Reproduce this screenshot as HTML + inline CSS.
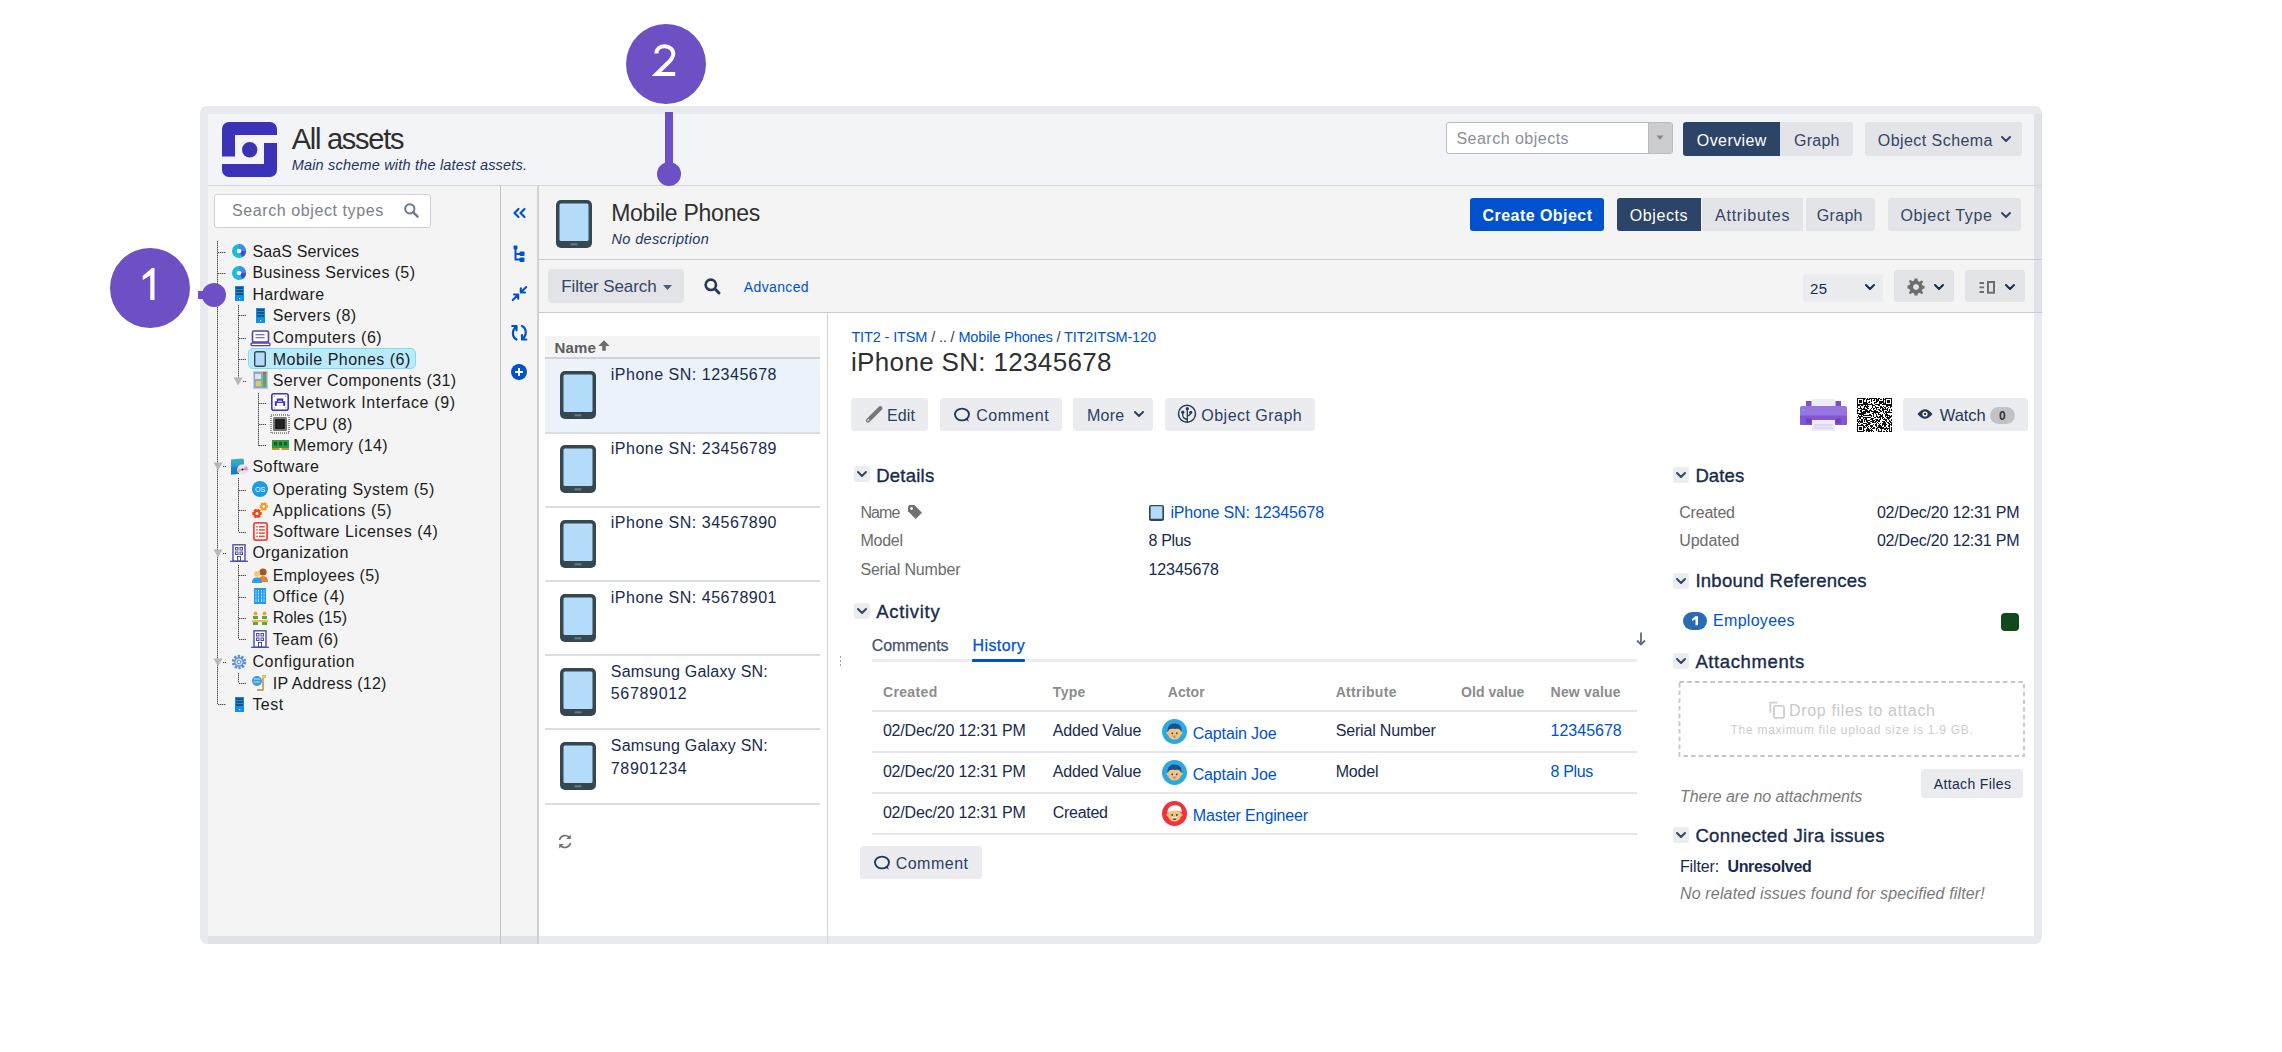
<!DOCTYPE html>
<html><head><meta charset="utf-8">
<style>
*{margin:0;padding:0;box-sizing:border-box}
html,body{width:2282px;height:1052px;overflow:hidden;background:#fff;font-family:"Liberation Sans",sans-serif;color:#172b4d}
.a{position:absolute}
.t{position:absolute;white-space:nowrap;line-height:1}
svg{position:absolute;overflow:visible}
</style></head><body>
<div class="a" style="left:110px;top:248px;width:80px;height:80px;background:#6c50c4;border-radius:50%"></div>
<svg style="left:0;top:0" width="1" height="1"><path fill="#fff" d="M152,268.1 L154.5,268.1 L154.5,299.9 L150.3,299.9 L150.3,275.6 L142.7,279.9 L142.7,276 Z"/></svg>
<div class="a" style="left:626px;top:24px;width:80px;height:80px;background:#6c50c4;border-radius:50%"></div>
<svg style="left:0;top:0" width="1" height="1"><path fill="none" stroke="#fff" stroke-width="4" d="M656.4,53.5 C656.4,48.8 660.2,46.3 664.9,46.3 C669.6,46.3 673.3,49.4 673.3,53.8 C673.3,57.5 671.3,60 667.5,63.3 L656.6,73.9 L675.2,73.9"/></svg>
<div class="a" style="left:200px;top:106px;width:1842px;height:838px;background:#e9eaee;border-radius:7px"></div>
<div class="a" style="left:2034px;top:114px;width:8px;height:199px;background:#e1e2e6;"></div>
<div class="a" style="left:208px;top:114px;width:1826px;height:822px;background:#f4f4f4;"></div>
<div class="a" style="left:208px;top:114px;width:1826px;height:71px;background:#f3f4f7;"></div>
<div class="a" style="left:208px;top:185px;width:1834px;height:1px;background:#d6d7da;"></div>
<svg style="left:222px;top:122px" width="55" height="55" viewBox="0 0 55 55"><g fill="#3b32b7">
<path d="M7,0 H48 A7,7 0 0 1 55,7 V13 H13 V34.5 H0 V7 A7,7 0 0 1 7,0 Z"/>
<path d="M42,21 H55 V48 A7,7 0 0 1 48,55 H7 A7,7 0 0 1 0,48 V42 H42 Z"/>
<circle cx="27.7" cy="27.7" r="7.7"/></g></svg>
<div class="t" style="left:291.70px;top:125.00px;font-size:29px;color:#2e2e2e;letter-spacing:-1.255px;">All assets</div>
<div class="t" style="left:291.70px;top:158.00px;font-size:14.5px;color:#1d3461;letter-spacing:0.189px;font-style:italic;">Main scheme with the latest assets.</div>
<div class="a" style="left:1446px;top:122px;width:227px;height:32px;background:#fff;border:1px solid #b9bbbe;border-radius:3px"></div>
<div class="a" style="left:1648px;top:123px;width:24px;height:30px;background:#cdcdcf;border-left:1px solid #b9bbbe;border-radius:0 2px 2px 0"></div>
<svg style="left:1656px;top:135px" width="8" height="6"><path d="M0.5,0.5 H7.5 L4,5 Z" fill="#8a8a8a"/></svg>
<div class="t" style="left:1456.40px;top:131.00px;font-size:16px;color:#8a8f98;letter-spacing:0.49px;">Search objects</div>
<div class="a" style="left:1683px;top:122px;width:97px;height:34px;background:#2c4467;border-radius:3px 0 0 3px"></div>
<div class="a" style="left:1780px;top:122px;width:73px;height:34px;background:#e2e4e8;border-radius:0 3px 3px 0"></div>
<div class="t" style="left:1696.80px;top:133.00px;font-size:16px;color:#fff;letter-spacing:0.417px;">Overview</div>
<div class="t" style="left:1794.00px;top:133.00px;font-size:16px;color:#344563;letter-spacing:0.258px;">Graph</div>
<div class="a" style="left:1865px;top:122px;width:157px;height:34px;background:#e2e4e8;border-radius:3px"></div>
<div class="t" style="left:1877.80px;top:133.00px;font-size:16px;color:#344563;letter-spacing:0.443px;">Object Schema</div>
<svg style="left:2001px;top:136px" width="10" height="6"><path d="M1,1 L5,5 L9,1" fill="none" stroke="#344563" stroke-width="2" stroke-linecap="round" stroke-linejoin="round"/></svg>
<div class="a" style="left:208px;top:936px;width:331px;height:8px;background:#e1e2e6;"></div>
<div class="a" style="left:500px;top:186px;width:1px;height:758px;background:#c2c3c6;"></div>
<div class="a" style="left:537px;top:186px;width:2px;height:758px;background:#d0d1d4;"></div>
<div class="a" style="left:214px;top:194px;width:217px;height:34px;background:#fff;border:1px solid #cfd2d7;border-radius:3px"></div>
<div class="t" style="left:232.00px;top:203.00px;font-size:16px;color:#7d8188;letter-spacing:0.593px;">Search object types</div>
<svg style="left:404px;top:203px" width="15" height="15"><circle cx="5.8" cy="5.8" r="4.6" fill="none" stroke="#6b778c" stroke-width="2"/><path d="M9.2,9.2 L13.6,13.6" stroke="#6b778c" stroke-width="2.4" stroke-linecap="round"/></svg>
<div class="a" style="left:248px;top:348px;width:168px;height:21px;background:#b9ebfc;border:1.5px solid #80dbfa;border-radius:5px"></div>
<div class="t" style="left:252.40px;top:244.00px;font-size:16px;color:#1c1c1c;letter-spacing:0.147px;">SaaS Services</div>
<svg style="left:232.1px;top:244.2px" width="14" height="14" viewBox="0 0 14 14"><circle cx="7" cy="7" r="7" fill="#1dbcd5"/><path d="M7,7 V0 A7,7 0 0 1 14,7 Z" fill="#3e8af6"/><path d="M7,7 H14 A7,7 0 0 1 10.5,13.06 Z" fill="#4b48c8"/><circle cx="7" cy="7" r="2.3" fill="#fff"/></svg>
<div class="t" style="left:252.40px;top:265.00px;font-size:16px;color:#1c1c1c;letter-spacing:0.394px;">Business Services (5)</div>
<svg style="left:232.1px;top:265.59999999999997px" width="14" height="14" viewBox="0 0 14 14"><circle cx="7" cy="7" r="7" fill="#1dbcd5"/><path d="M7,7 V0 A7,7 0 0 1 14,7 Z" fill="#3e8af6"/><path d="M7,7 H14 A7,7 0 0 1 10.5,13.06 Z" fill="#4b48c8"/><circle cx="7" cy="7" r="2.3" fill="#fff"/></svg>
<div class="t" style="left:252.40px;top:287.00px;font-size:16px;color:#1c1c1c;letter-spacing:0.349px;">Hardware</div>
<svg style="left:234.6px;top:286.3px" width="9" height="15" viewBox="0 0 9 15"><rect width="9" height="15" fill="#0a8ff2"/><rect x="1" y="1" width="7" height="2" fill="#23506e"/><rect x="1" y="4" width="7" height="2" fill="#23506e"/><rect x="1" y="7" width="7" height="2" fill="#23506e"/><rect x="4" y="12" width="1.2" height="1.2" fill="#fff"/></svg>
<div class="t" style="left:272.70px;top:308.00px;font-size:16px;color:#1c1c1c;letter-spacing:0.428px;">Servers (8)</div>
<svg style="left:255.8px;top:307.5px" width="9" height="15" viewBox="0 0 9 15"><rect width="9" height="15" fill="#0a8ff2"/><rect x="1" y="1" width="7" height="2" fill="#23506e"/><rect x="1" y="4" width="7" height="2" fill="#23506e"/><rect x="1" y="7" width="7" height="2" fill="#23506e"/><rect x="4" y="12" width="1.2" height="1.2" fill="#fff"/></svg>
<div class="t" style="left:272.70px;top:330.00px;font-size:16px;color:#1c1c1c;letter-spacing:0.562px;">Computers (6)</div>
<svg style="left:250.8px;top:329.59999999999997px" width="19" height="16" viewBox="0 0 19 16"><rect x="1.5" y="1" width="16" height="11" rx="1.5" fill="#fff" stroke="#5043a8" stroke-width="1.6"/><rect x="4.5" y="4" width="9" height="1.3" fill="#7a6fd0"/><rect x="4.5" y="7" width="9" height="1.3" fill="#7a6fd0"/><rect x="0" y="13" width="19" height="2.6" rx="1.2" fill="#fff" stroke="#5043a8" stroke-width="1.4"/></svg>
<div class="t" style="left:272.70px;top:352.00px;font-size:16px;color:#1c1c1c;letter-spacing:0.485px;">Mobile Phones (6)</div>
<svg style="left:254.3px;top:350.9px" width="12" height="16" viewBox="0 0 12 16"><rect x="0.7" y="0.7" width="10.6" height="14.6" rx="1.6" fill="#b3dcfa" stroke="#37474f" stroke-width="1.4"/></svg>
<div class="t" style="left:272.70px;top:373.00px;font-size:16px;color:#1c1c1c;letter-spacing:0.391px;">Server Components (31)</div>
<svg style="left:252.8px;top:371.2px" width="15" height="18" viewBox="0 0 15 18"><rect width="15" height="18" fill="#b9cde0"/><rect x="1" y="1" width="13" height="16" fill="#8fa9c4"/><rect x="2" y="3" width="6" height="5" fill="#d7e3ee"/><rect x="3" y="10" width="5" height="5" fill="#e9c85a"/><rect x="10" y="2" width="3" height="14" fill="#5aa65e"/><rect x="10" y="1" width="3" height="2" fill="#e05050"/></svg>
<div class="t" style="left:293.20px;top:395.00px;font-size:16px;color:#1c1c1c;letter-spacing:0.621px;">Network Interface (9)</div>
<svg style="left:271.0px;top:393.4px" width="18" height="18" viewBox="0 0 18 18"><rect x="0.8" y="0.8" width="16.4" height="16.4" rx="2" fill="#fff" stroke="#3d3aa6" stroke-width="1.6"/><path d="M3.8,13 V8.3 H5.8 V5.6 H12.2 V8.3 H14.2 V13 Z" fill="#3b37c6"/><path d="M6.3,13 V10.6 H7.6 V13 M8.4,13 V10.6 H9.6 V13 M10.4,13 V10.6 H11.7 V13 M7,8.3 H11" stroke="#fff" stroke-width="1.1" fill="none"/><g fill="#6a66d8"><circle cx="3.2" cy="3.2" r="0.6"/><circle cx="14.8" cy="3.2" r="0.6"/><circle cx="3.2" cy="14.8" r="0.6"/><circle cx="14.8" cy="14.8" r="0.6"/></g></svg>
<div class="t" style="left:293.20px;top:417.00px;font-size:16px;color:#1c1c1c;letter-spacing:0.22px;">CPU (8)</div>
<svg style="left:271.0px;top:414.7px" width="18" height="18" viewBox="0 0 18 18"><rect x="0" y="0" width="18" height="18" fill="none" stroke="#333" stroke-width="1" stroke-dasharray="1 1"/><rect x="2" y="2" width="14" height="14" rx="1.5" fill="#777"/><rect x="4" y="4" width="10" height="10" fill="#222"/></svg>
<div class="t" style="left:293.20px;top:438.00px;font-size:16px;color:#1c1c1c;letter-spacing:0.382px;">Memory (14)</div>
<svg style="left:271.5px;top:440.0px" width="17" height="10" viewBox="0 0 17 10"><rect width="17" height="8" fill="#2d9a42"/><rect x="2" y="2" width="3" height="3.5" fill="#1c5a2a"/><rect x="7" y="2" width="3" height="3.5" fill="#1c5a2a"/><rect x="12" y="2" width="3" height="3.5" fill="#1c5a2a"/><rect y="8" width="7.5" height="2" fill="#c9902c"/><rect x="9.5" y="8" width="7.5" height="2" fill="#c9902c"/></svg>
<div class="t" style="left:252.40px;top:459.00px;font-size:16px;color:#1c1c1c;letter-spacing:0.494px;">Software</div>
<svg style="left:230.1px;top:457.5px" width="19" height="17" viewBox="0 0 19 17"><defs><linearGradient id="sg" x1="0" y1="0" x2="0" y2="1"><stop offset="0" stop-color="#3ab0c8"/><stop offset="1" stop-color="#1a7fd8"/></linearGradient></defs><path d="M1,1.5 L12,0.5 Q14,0.5 14,2.5 L14,15.5 L1,16.5 Z" fill="url(#sg)"/><path d="M1,9 L8,8.5 L8,16 L1,16.5 Z" fill="#1b6fd0" opacity="0.6"/><circle cx="12.5" cy="11.5" r="5.3" fill="#e9e4f0"/><path d="M12.5,11.5 L16.5,8 A5.3,5.3 0 0 1 17.6,13 Z" fill="#d58ad8"/><path d="M12.5,11.5 L8.5,15 A5.3,5.3 0 0 1 7.4,10 Z" fill="#f2b96a"/><circle cx="12.5" cy="11.5" r="1.1" fill="#222"/></svg>
<div class="t" style="left:272.70px;top:482.00px;font-size:16px;color:#1c1c1c;letter-spacing:0.502px;">Operating System (5)</div>
<svg style="left:252.3px;top:481.2px" width="16" height="16" viewBox="0 0 16 16"><circle cx="8" cy="8" r="8" fill="#1a9be6"/><text x="8" y="10.6" font-size="7" font-family="Liberation Sans" fill="#fff" text-anchor="middle">OS</text></svg>
<div class="t" style="left:272.70px;top:503.00px;font-size:16px;color:#1c1c1c;letter-spacing:0.582px;">Applications (5)</div>
<svg style="left:252.3px;top:502.2px" width="16" height="16" viewBox="0 0 16 16"><path fill-rule="evenodd" fill="#f04a12" d="M9.68,10.05 L9.68,12.95 L7.90,13.28 L7.99,13.12 L8.59,14.83 L6.09,16.28 L4.91,14.90 L5.09,14.90 L3.91,16.28 L1.41,14.83 L2.01,13.12 L2.10,13.28 L0.32,12.95 L0.32,10.05 L2.10,9.72 L2.01,9.88 L1.41,8.17 L3.91,6.72 L5.09,8.10 L4.91,8.10 L6.09,6.72 L8.59,8.17 L7.99,9.88 L7.90,9.72 Z M6.50,11.50 A1.5,1.5 0 1 0 3.50,11.50 A1.5,1.5 0 1 0 6.50,11.50 Z"/><path fill-rule="evenodd" fill="#fa9a14" d="M15.81,3.23 L15.81,5.77 L14.26,6.07 L14.34,5.93 L14.85,7.42 L12.65,8.69 L11.62,7.50 L11.78,7.50 L10.75,8.69 L8.55,7.42 L9.06,5.93 L9.14,6.07 L7.59,5.77 L7.59,3.23 L9.14,2.93 L9.06,3.07 L8.55,1.58 L10.75,0.31 L11.78,1.50 L11.62,1.50 L12.65,0.31 L14.85,1.58 L14.34,3.07 L14.26,2.93 Z M13.10,4.50 A1.4,1.4 0 1 0 10.30,4.50 A1.4,1.4 0 1 0 13.10,4.50 Z"/></svg>
<div class="t" style="left:272.70px;top:524.00px;font-size:16px;color:#1c1c1c;letter-spacing:0.518px;">Software Licenses (4)</div>
<svg style="left:252.8px;top:522.1000000000001px" width="15" height="19" viewBox="0 0 15 19"><rect x="0.9" y="0.9" width="13.2" height="17.2" rx="2" fill="#fff" stroke="#f0463c" stroke-width="1.8"/><g fill="#f0463c"><rect x="3.3" y="4" width="1.5" height="1.5"/><rect x="6" y="4" width="5.8" height="1.5"/><rect x="3.3" y="7.2" width="1.5" height="1.5"/><rect x="6" y="7.2" width="5.8" height="1.5"/><rect x="3.3" y="10.4" width="1.5" height="1.5"/><rect x="6" y="10.4" width="5.8" height="1.5"/><rect x="3.3" y="13.6" width="1.5" height="1.5"/><rect x="6" y="13.6" width="5.8" height="1.5"/></g></svg>
<div class="t" style="left:252.40px;top:545.00px;font-size:16px;color:#1c1c1c;letter-spacing:0.471px;">Organization</div>
<svg style="left:230.1px;top:543.6px" width="18" height="18" viewBox="0 0 18 18"><rect x="3" y="0.8" width="12" height="16.4" fill="#fff" stroke="#4a4ab0" stroke-width="1.4"/><rect x="5.5" y="3.5" width="2.5" height="2.5" fill="none" stroke="#4a4ab0" stroke-width="1"/><rect x="10" y="3.5" width="2.5" height="2.5" fill="none" stroke="#4a4ab0" stroke-width="1"/><rect x="5.5" y="8" width="2.5" height="2.5" fill="none" stroke="#4a4ab0" stroke-width="1"/><rect x="10" y="8" width="2.5" height="2.5" fill="none" stroke="#4a4ab0" stroke-width="1"/><rect x="7.5" y="12.5" width="3" height="4.7" fill="none" stroke="#4a4ab0" stroke-width="1"/><path d="M0,17.3 H18" stroke="#4a4ab0" stroke-width="1.2"/></svg>
<div class="t" style="left:272.70px;top:568.00px;font-size:16px;color:#1c1c1c;letter-spacing:0.321px;">Employees (5)</div>
<svg style="left:252.3px;top:567.0px" width="16" height="16" viewBox="0 0 16 16"><circle cx="11" cy="5" r="3.6" fill="#a8561b"/><path d="M6,15 Q6,9 11,9 Q16,9 16,15 Z" fill="#f07c2c"/><circle cx="5" cy="7" r="3" fill="#f4c58a"/><path d="M0,16 Q0,10.5 5,10.5 Q10,10.5 10,16 Z" fill="#2f9de0"/></svg>
<div class="t" style="left:272.70px;top:589.00px;font-size:16px;color:#1c1c1c;letter-spacing:0.711px;">Office (4)</div>
<svg style="left:253.3px;top:588.3000000000001px" width="14" height="16" viewBox="0 0 14 16"><rect x="1" y="0" width="12" height="16" fill="#1e9af0"/><path d="M3,2 V14 M5.5,2 V14 M8.5,2 V14 M11,2 V14" stroke="#bfe3fb" stroke-width="1"/><path d="M2,4 H12 M2,7 H12 M2,10 H12" stroke="#1e9af0" stroke-width="1"/></svg>
<div class="t" style="left:272.70px;top:610.00px;font-size:16px;color:#1c1c1c;letter-spacing:0.055px;">Roles (15)</div>
<svg style="left:252.3px;top:610.6px" width="16" height="14" viewBox="0 0 16 14"><circle cx="3.5" cy="2.5" r="2" fill="#e6a82a"/><circle cx="12.5" cy="2.5" r="2" fill="#e6a82a"/><rect x="1" y="5" width="5" height="3" fill="#5aaa3c"/><rect x="10" y="5" width="5" height="3" fill="#5aaa3c"/><path d="M0,10 H16" stroke="#e6a82a" stroke-width="1.5"/><rect x="1" y="11" width="5" height="3" fill="#5aaa3c"/><rect x="10" y="11" width="5" height="3" fill="#5aaa3c"/></svg>
<div class="t" style="left:272.70px;top:632.00px;font-size:16px;color:#1c1c1c;letter-spacing:0.368px;">Team (6)</div>
<svg style="left:251.3px;top:629.8000000000001px" width="18" height="18" viewBox="0 0 18 18"><rect x="3" y="0.8" width="12" height="16.4" fill="#fff" stroke="#4a4ab0" stroke-width="1.4"/><rect x="5.5" y="3.5" width="2.5" height="2.5" fill="none" stroke="#4a4ab0" stroke-width="1"/><rect x="10" y="3.5" width="2.5" height="2.5" fill="none" stroke="#4a4ab0" stroke-width="1"/><rect x="5.5" y="8" width="2.5" height="2.5" fill="none" stroke="#4a4ab0" stroke-width="1"/><rect x="10" y="8" width="2.5" height="2.5" fill="none" stroke="#4a4ab0" stroke-width="1"/><rect x="7.5" y="12.5" width="3" height="4.7" fill="none" stroke="#4a4ab0" stroke-width="1"/><path d="M0,17.3 H18" stroke="#4a4ab0" stroke-width="1.2"/></svg>
<div class="t" style="left:252.40px;top:654.00px;font-size:16px;color:#1c1c1c;letter-spacing:0.569px;">Configuration</div>
<svg style="left:231.1px;top:653.6px" width="16" height="16" viewBox="0 0 16 16"><circle cx="8" cy="8" r="5.6" fill="none" stroke="#5a8fd8" stroke-width="3.2" stroke-dasharray="2.2 1.3"/><circle cx="8" cy="8" r="4.2" fill="#cfe0f5" stroke="#5a8fd8" stroke-width="1.2"/><circle cx="8" cy="8" r="1.8" fill="#fff" stroke="#5a8fd8" stroke-width="1"/></svg>
<div class="t" style="left:272.70px;top:676.00px;font-size:16px;color:#1c1c1c;letter-spacing:0.265px;">IP Address (12)</div>
<svg style="left:251.3px;top:674.0px" width="18" height="18" viewBox="0 0 18 18"><rect x="0" y="0" width="18" height="18" fill="#f7f7f7"/><circle cx="6" cy="7" r="5" fill="#3f9be0"/><path d="M3,5 H9 M3,8 H9" stroke="#bde0f8" stroke-width="1"/><path d="M12,2 V16 H6" fill="none" stroke="#b08d3c" stroke-width="1.4"/><rect x="11" y="1" width="4" height="3" fill="#f0c040"/></svg>
<div class="t" style="left:252.40px;top:697.00px;font-size:16px;color:#1c1c1c;letter-spacing:0.452px;">Test</div>
<svg style="left:234.6px;top:696.7px" width="9" height="15" viewBox="0 0 9 15"><rect width="9" height="15" fill="#0a8ff2"/><rect x="1" y="1" width="7" height="2" fill="#23506e"/><rect x="1" y="4" width="7" height="2" fill="#23506e"/><rect x="1" y="7" width="7" height="2" fill="#23506e"/><rect x="4" y="12" width="1.2" height="1.2" fill="#fff"/></svg>
<div class="a" style="left:217px;top:241px;width:1px;height:463px;background:repeating-linear-gradient(to bottom,#4a4a4a 0 1px,#b0b0b0 1px 2px);"></div>
<div class="a" style="left:218px;top:252px;width:8px;height:1px;background:repeating-linear-gradient(to right,#4a4a4a 0 1px,#b8b8b8 1px 2px);"></div>
<div class="a" style="left:218px;top:273px;width:8px;height:1px;background:repeating-linear-gradient(to right,#4a4a4a 0 1px,#b8b8b8 1px 2px);"></div>
<svg style="left:212.5px;top:290px" width="10" height="9"><path d="M0.5,0.5 H9.5 L5,8.5 Z" fill="#b8b8b8"/></svg>
<div class="a" style="left:223px;top:294px;width:3px;height:1px;background:repeating-linear-gradient(to right,#4a4a4a 0 1px,#b8b8b8 1px 2px);"></div>
<svg style="left:212.5px;top:462px" width="10" height="9"><path d="M0.5,0.5 H9.5 L5,8.5 Z" fill="#b8b8b8"/></svg>
<div class="a" style="left:223px;top:466px;width:3px;height:1px;background:repeating-linear-gradient(to right,#4a4a4a 0 1px,#b8b8b8 1px 2px);"></div>
<svg style="left:212.5px;top:549px" width="10" height="9"><path d="M0.5,0.5 H9.5 L5,8.5 Z" fill="#b8b8b8"/></svg>
<div class="a" style="left:223px;top:553px;width:3px;height:1px;background:repeating-linear-gradient(to right,#4a4a4a 0 1px,#b8b8b8 1px 2px);"></div>
<svg style="left:212.5px;top:658px" width="10" height="9"><path d="M0.5,0.5 H9.5 L5,8.5 Z" fill="#b8b8b8"/></svg>
<div class="a" style="left:223px;top:662px;width:3px;height:1px;background:repeating-linear-gradient(to right,#4a4a4a 0 1px,#b8b8b8 1px 2px);"></div>
<div class="a" style="left:218px;top:704px;width:8px;height:1px;background:repeating-linear-gradient(to right,#4a4a4a 0 1px,#b8b8b8 1px 2px);"></div>
<div class="a" style="left:238px;top:305px;width:1px;height:75px;background:repeating-linear-gradient(to bottom,#4a4a4a 0 1px,#b0b0b0 1px 2px);"></div>
<div class="a" style="left:239px;top:315px;width:7px;height:1px;background:repeating-linear-gradient(to right,#4a4a4a 0 1px,#b8b8b8 1px 2px);"></div>
<div class="a" style="left:239px;top:338px;width:7px;height:1px;background:repeating-linear-gradient(to right,#4a4a4a 0 1px,#b8b8b8 1px 2px);"></div>
<div class="a" style="left:239px;top:359px;width:7px;height:1px;background:repeating-linear-gradient(to right,#4a4a4a 0 1px,#b8b8b8 1px 2px);"></div>
<svg style="left:233px;top:377px" width="10" height="9"><path d="M0.5,0.5 H9.5 L5,8.5 Z" fill="#b8b8b8"/></svg>
<div class="a" style="left:243px;top:381px;width:3px;height:1px;background:repeating-linear-gradient(to right,#4a4a4a 0 1px,#b8b8b8 1px 2px);"></div>
<div class="a" style="left:258px;top:393px;width:1px;height:53px;background:repeating-linear-gradient(to bottom,#4a4a4a 0 1px,#b0b0b0 1px 2px);"></div>
<div class="a" style="left:259px;top:403px;width:7px;height:1px;background:repeating-linear-gradient(to right,#4a4a4a 0 1px,#b8b8b8 1px 2px);"></div>
<div class="a" style="left:259px;top:424px;width:7px;height:1px;background:repeating-linear-gradient(to right,#4a4a4a 0 1px,#b8b8b8 1px 2px);"></div>
<div class="a" style="left:259px;top:445px;width:7px;height:1px;background:repeating-linear-gradient(to right,#4a4a4a 0 1px,#b8b8b8 1px 2px);"></div>
<div class="a" style="left:238px;top:478px;width:1px;height:54px;background:repeating-linear-gradient(to bottom,#4a4a4a 0 1px,#b0b0b0 1px 2px);"></div>
<div class="a" style="left:239px;top:490px;width:7px;height:1px;background:repeating-linear-gradient(to right,#4a4a4a 0 1px,#b8b8b8 1px 2px);"></div>
<div class="a" style="left:239px;top:510px;width:7px;height:1px;background:repeating-linear-gradient(to right,#4a4a4a 0 1px,#b8b8b8 1px 2px);"></div>
<div class="a" style="left:239px;top:532px;width:7px;height:1px;background:repeating-linear-gradient(to right,#4a4a4a 0 1px,#b8b8b8 1px 2px);"></div>
<div class="a" style="left:238px;top:565px;width:1px;height:74px;background:repeating-linear-gradient(to bottom,#4a4a4a 0 1px,#b0b0b0 1px 2px);"></div>
<div class="a" style="left:239px;top:575px;width:7px;height:1px;background:repeating-linear-gradient(to right,#4a4a4a 0 1px,#b8b8b8 1px 2px);"></div>
<div class="a" style="left:239px;top:597px;width:7px;height:1px;background:repeating-linear-gradient(to right,#4a4a4a 0 1px,#b8b8b8 1px 2px);"></div>
<div class="a" style="left:239px;top:618px;width:7px;height:1px;background:repeating-linear-gradient(to right,#4a4a4a 0 1px,#b8b8b8 1px 2px);"></div>
<div class="a" style="left:239px;top:639px;width:7px;height:1px;background:repeating-linear-gradient(to right,#4a4a4a 0 1px,#b8b8b8 1px 2px);"></div>
<div class="a" style="left:238px;top:673px;width:1px;height:10px;background:repeating-linear-gradient(to bottom,#4a4a4a 0 1px,#b0b0b0 1px 2px);"></div>
<div class="a" style="left:239px;top:683px;width:7px;height:1px;background:repeating-linear-gradient(to right,#4a4a4a 0 1px,#b8b8b8 1px 2px);"></div>
<div class="a" style="left:198px;top:291px;width:16px;height:8px;background:#6c50c4;"></div>
<div class="a" style="left:202px;top:283px;width:24px;height:24px;background:#6c50c4;border-radius:50%"></div>
<svg style="left:513px;top:208px" width="13" height="10" viewBox="0 0 13 10"><path d="M5.5,1 L1.5,5 L5.5,9 M11.5,1 L7.5,5 L11.5,9" fill="none" stroke="#0052cc" stroke-width="2.2" stroke-linecap="round" stroke-linejoin="round"/></svg>
<svg style="left:513px;top:245px" width="12" height="18" viewBox="0 0 12 18"><rect x="0.5" y="0.5" width="4" height="4" rx="1" fill="#0052cc"/><path d="M2.5,3 V14.5 H8 M2.5,9 H8" fill="none" stroke="#0052cc" stroke-width="2"/><rect x="6.5" y="6.5" width="5" height="4.5" rx="1" fill="#0052cc"/><rect x="6.5" y="12.5" width="5" height="4.5" rx="1" fill="#0052cc"/></svg>
<svg style="left:511px;top:285px" width="17" height="17" viewBox="0 0 17 17"><g fill="none" stroke="#0052cc" stroke-width="2.1" stroke-linecap="round" stroke-linejoin="round"><path d="M1.8,15 L6.5,10.3 M3,9.5 H7.2 V13.7"/><path d="M15.2,2 L10.5,6.7 M14,7.5 H9.8 V3.3"/></g></svg>
<svg style="left:507px;top:320px" width="25" height="25" viewBox="0 0 25 25"><g fill="none" stroke="#0052cc" stroke-width="2.2" stroke-linecap="round" stroke-linejoin="round"><path d="M9.5,19.5 C5,17 4.5,10 9.5,6.5 M5.2,6 H9.5 V10.3"/><path d="M15,6 C20,8.5 20,16 15,19 M15,15 V19.5 H19.3"/></g></svg>
<svg style="left:511px;top:364px" width="16" height="16" viewBox="0 0 16 16"><circle cx="8" cy="8" r="8" fill="#0052cc"/><path d="M8,4 V12 M4,8 H12" stroke="#fff" stroke-width="2"/></svg>
<svg style="left:555.5px;top:200px" width="36" height="48" viewBox="0 0 36 48"><rect x="0" y="0" width="36" height="48" rx="5" fill="#37474f"/><rect x="3.5" y="3.5" width="29" height="37.5" rx="1.5" fill="#b3dcfa"/><rect x="14.5" y="43.3" width="7" height="2" fill="#6b7b83"/></svg>
<div class="t" style="left:611.20px;top:202.00px;font-size:23px;color:#2f2f2f;letter-spacing:-0.263px;">Mobile Phones</div>
<div class="t" style="left:611.50px;top:232.00px;font-size:14.5px;color:#1d3461;letter-spacing:0.355px;font-style:italic;">No description</div>
<div class="a" style="left:539px;top:259px;width:1503px;height:1px;background:#c9cacd;"></div>
<div class="a" style="left:1470px;top:198px;width:134px;height:33px;background:#0052cc;border-radius:3px"></div>
<div class="t" style="left:1482.60px;top:208.00px;font-size:16px;color:#fff;font-weight:700;letter-spacing:0.447px;">Create Object</div>
<div class="a" style="left:1617px;top:198px;width:84px;height:33px;background:#2c4467;border-radius:3px 0 0 3px"></div>
<div class="t" style="left:1629.70px;top:208.00px;font-size:16px;color:#fff;letter-spacing:0.61px;">Objects</div>
<div class="a" style="left:1702px;top:198px;width:101px;height:33px;background:#e2e4e8;"></div>
<div class="t" style="left:1715.00px;top:208.00px;font-size:16px;color:#344563;letter-spacing:0.757px;">Attributes</div>
<div class="a" style="left:1806px;top:198px;width:69px;height:33px;background:#e2e4e8;border-radius:0 3px 3px 0"></div>
<div class="t" style="left:1816.80px;top:208.00px;font-size:16px;color:#344563;letter-spacing:0.308px;">Graph</div>
<div class="a" style="left:1888px;top:198px;width:133px;height:33px;background:#e2e4e8;border-radius:3px"></div>
<div class="t" style="left:1900.40px;top:208.00px;font-size:16px;color:#344563;letter-spacing:0.641px;">Object Type</div>
<svg style="left:2001px;top:212px" width="10" height="6"><path d="M1,1 L5,5 L9,1" fill="none" stroke="#344563" stroke-width="2" stroke-linecap="round" stroke-linejoin="round"/></svg>
<div class="a" style="left:539px;top:312px;width:1503px;height:1px;background:#c9cacd;"></div>
<div class="a" style="left:548px;top:269px;width:136px;height:34px;background:#e2e4e8;border-radius:4px"></div>
<div class="t" style="left:561.30px;top:278.00px;font-size:17px;color:#344563;letter-spacing:-0.08px;">Filter Search</div>
<svg style="left:663px;top:285px" width="9" height="5"><path d="M0,0 H9 L4.5,5 Z" fill="#505f79"/></svg>
<svg style="left:704px;top:278px" width="17" height="17" viewBox="0 0 17 17"><circle cx="6.8" cy="6.8" r="5.2" fill="none" stroke="#253858" stroke-width="2.6"/><path d="M10.8,10.8 L15,15" stroke="#253858" stroke-width="3" stroke-linecap="round"/></svg>
<div class="t" style="left:743.80px;top:280.00px;font-size:14px;color:#0052cc;letter-spacing:0.362px;">Advanced</div>
<div class="a" style="left:1803px;top:274px;width:80px;height:28px;background:#ebecf0;border-radius:3px"></div>
<div class="t" style="left:1810.00px;top:281.00px;font-size:15px;color:#172b4d;letter-spacing:0.3px;">25</div>
<svg style="left:1865px;top:284px" width="10" height="6"><path d="M1,1 L5,5 L9,1" fill="none" stroke="#172b4d" stroke-width="2" stroke-linecap="round" stroke-linejoin="round"/></svg>
<div class="a" style="left:1894px;top:270px;width:60px;height:32px;background:#e2e4e8;border-radius:3px"></div>
<svg style="left:1907px;top:278px" width="18" height="18" viewBox="0 0 18 18"><path fill="#6e6e6e" fill-rule="evenodd" d="M7.6,0.5 H10.4 L10.9,3 L12.7,3.8 L14.8,2.3 L16.2,3.7 L14.7,5.8 L15.5,7.6 L17.5,8 V10.4 L15.5,10.9 L14.7,12.7 L16.2,14.8 L14.8,16.2 L12.7,14.7 L10.9,15.5 L10.4,17.5 H7.6 L7.1,15.5 L5.3,14.7 L3.2,16.2 L1.8,14.8 L3.3,12.7 L2.5,10.9 L0.5,10.4 V7.6 L2.5,7.1 L3.3,5.3 L1.8,3.2 L3.2,1.8 L5.3,3.3 L7.1,2.5 Z M9,6 A3,3 0 1 0 9.01,6 Z"/></svg>
<svg style="left:1933.5px;top:284px" width="10" height="6"><path d="M1,1 L5,5 L9,1" fill="none" stroke="#172b4d" stroke-width="2" stroke-linecap="round" stroke-linejoin="round"/></svg>
<div class="a" style="left:1965px;top:270px;width:60px;height:32px;background:#e2e4e8;border-radius:3px"></div>
<svg style="left:1979px;top:279px" width="17" height="16" viewBox="0 0 17 16"><path d="M0.5,4 H5 M0.5,8.4 H5 M0.5,13 H5" stroke="#6e6e6e" stroke-width="1.9"/><rect x="9" y="3" width="6" height="10.7" fill="none" stroke="#6e6e6e" stroke-width="2"/></svg>
<svg style="left:2004.5px;top:284px" width="10" height="6"><path d="M1,1 L5,5 L9,1" fill="none" stroke="#172b4d" stroke-width="2" stroke-linecap="round" stroke-linejoin="round"/></svg>
<div class="a" style="left:539px;top:313px;width:288px;height:623px;background:#fff;"></div>
<div class="a" style="left:827px;top:313px;width:1px;height:631px;background:#d4d5d8;"></div>
<div class="a" style="left:828px;top:313px;width:1206px;height:623px;background:#fff;"></div>
<div class="a" style="left:545px;top:336px;width:275px;height:22px;background:#f4f4f4;"></div>
<div class="a" style="left:545px;top:357px;width:275px;height:2px;background:#d3d3d5;"></div>
<div class="t" style="left:554.40px;top:340.00px;font-size:15px;color:#5c5c5c;font-weight:700;letter-spacing:0.215px;">Name</div>
<svg style="left:598px;top:340px" width="12" height="11" viewBox="0 0 12 11"><path d="M0.3,6 L6,0.2 L11.7,6 H7.8 V10.8 H4.2 V6 Z" fill="#6e6e6e"/></svg>
<div class="a" style="left:545px;top:359.0px;width:275px;height:72.5px;background:#ebf2fa;"></div>
<div class="a" style="left:545px;top:432px;width:275px;height:1.5px;background:#dcdde0;"></div>
<svg style="left:560px;top:371px" width="36" height="48" viewBox="0 0 36 48"><rect x="0" y="0" width="36" height="48" rx="5" fill="#37474f"/><rect x="3.5" y="3.5" width="29" height="37.5" rx="1.5" fill="#b3dcfa"/><rect x="14.5" y="43.3" width="7" height="2" fill="#6b7b83"/></svg>
<div class="t" style="left:610.80px;top:367.00px;font-size:16px;color:#172b4d;letter-spacing:0.507px;">iPhone SN: 12345678</div>
<div class="a" style="left:545px;top:506px;width:275px;height:1.5px;background:#dcdde0;"></div>
<svg style="left:560px;top:445px" width="36" height="48" viewBox="0 0 36 48"><rect x="0" y="0" width="36" height="48" rx="5" fill="#37474f"/><rect x="3.5" y="3.5" width="29" height="37.5" rx="1.5" fill="#b3dcfa"/><rect x="14.5" y="43.3" width="7" height="2" fill="#6b7b83"/></svg>
<div class="t" style="left:610.80px;top:441.00px;font-size:16px;color:#172b4d;letter-spacing:0.507px;">iPhone SN: 23456789</div>
<div class="a" style="left:545px;top:580px;width:275px;height:1.5px;background:#dcdde0;"></div>
<svg style="left:560px;top:520px" width="36" height="48" viewBox="0 0 36 48"><rect x="0" y="0" width="36" height="48" rx="5" fill="#37474f"/><rect x="3.5" y="3.5" width="29" height="37.5" rx="1.5" fill="#b3dcfa"/><rect x="14.5" y="43.3" width="7" height="2" fill="#6b7b83"/></svg>
<div class="t" style="left:610.80px;top:515.00px;font-size:16px;color:#172b4d;letter-spacing:0.507px;">iPhone SN: 34567890</div>
<div class="a" style="left:545px;top:654px;width:275px;height:1.5px;background:#dcdde0;"></div>
<svg style="left:560px;top:594px" width="36" height="48" viewBox="0 0 36 48"><rect x="0" y="0" width="36" height="48" rx="5" fill="#37474f"/><rect x="3.5" y="3.5" width="29" height="37.5" rx="1.5" fill="#b3dcfa"/><rect x="14.5" y="43.3" width="7" height="2" fill="#6b7b83"/></svg>
<div class="t" style="left:610.80px;top:590.00px;font-size:16px;color:#172b4d;letter-spacing:0.507px;">iPhone SN: 45678901</div>
<div class="a" style="left:545px;top:728px;width:275px;height:1.5px;background:#dcdde0;"></div>
<svg style="left:560px;top:668px" width="36" height="48" viewBox="0 0 36 48"><rect x="0" y="0" width="36" height="48" rx="5" fill="#37474f"/><rect x="3.5" y="3.5" width="29" height="37.5" rx="1.5" fill="#b3dcfa"/><rect x="14.5" y="43.3" width="7" height="2" fill="#6b7b83"/></svg>
<div class="t" style="left:610.80px;top:664.00px;font-size:16px;color:#172b4d;letter-spacing:0.238px;">Samsung Galaxy SN:</div>
<div class="t" style="left:610.80px;top:686.00px;font-size:16px;color:#172b4d;letter-spacing:0.673px;">56789012</div>
<div class="a" style="left:545px;top:803px;width:275px;height:1.5px;background:#dcdde0;"></div>
<svg style="left:560px;top:742px" width="36" height="48" viewBox="0 0 36 48"><rect x="0" y="0" width="36" height="48" rx="5" fill="#37474f"/><rect x="3.5" y="3.5" width="29" height="37.5" rx="1.5" fill="#b3dcfa"/><rect x="14.5" y="43.3" width="7" height="2" fill="#6b7b83"/></svg>
<div class="t" style="left:610.80px;top:738.00px;font-size:16px;color:#172b4d;letter-spacing:0.238px;">Samsung Galaxy SN:</div>
<div class="t" style="left:610.80px;top:761.00px;font-size:16px;color:#172b4d;letter-spacing:0.673px;">78901234</div>
<svg style="left:557px;top:833px" width="16" height="17" viewBox="0 0 16 17"><path d="M2.5,7 A5.8,5.8 0 0 1 12.8,4.8 M13.5,10 A5.8,5.8 0 0 1 3.2,12.2" fill="none" stroke="#707070" stroke-width="1.6"/><path d="M13.8,1.5 V6 H9.3 Z M2.2,15.5 V11 H6.7 Z" fill="#707070"/></svg>
<div class="t" style="left:851.40px;top:330.00px;font-size:14.5px;color:#0052cc;letter-spacing:-0.134px;">TIT2 - ITSM <span style="color:#2a3f62">/ .. /</span> Mobile Phones <span style="color:#2a3f62">/</span> TIT2ITSM-120</div>
<div class="t" style="left:851.00px;top:349.00px;font-size:26px;color:#2f2f2f;letter-spacing:0.338px;">iPhone SN: 12345678</div>
<div class="a" style="left:851px;top:398px;width:77px;height:33px;background:#ebecf0;border-radius:3px"></div>
<svg style="left:860px;top:400px" width="30" height="30"><path d="M8,20.5 L20.3,8.2" stroke="#777" stroke-width="4.3" stroke-linecap="round"/><path d="M6.5,21.8 L8.3,18.8 L9.8,20.3 Z" fill="#ddd"/></svg>
<div class="t" style="left:887.00px;top:408.00px;font-size:16px;color:#2a3f62;letter-spacing:0.143px;">Edit</div>
<div class="a" style="left:940px;top:398px;width:122px;height:33px;background:#ebecf0;border-radius:3px"></div>
<svg style="left:953.7px;top:407px" width="16" height="16" viewBox="0 0 16 16"><ellipse cx="8" cy="7.5" rx="7" ry="5.9" fill="none" stroke="#253858" stroke-width="1.9"/><path d="M10.5,12.2 L15,14.6 L13.2,10.8 Z" fill="#253858"/></svg>
<div class="t" style="left:976.30px;top:408.00px;font-size:16px;color:#2a3f62;letter-spacing:0.491px;">Comment</div>
<div class="a" style="left:1073px;top:398px;width:80px;height:33px;background:#ebecf0;border-radius:3px"></div>
<div class="t" style="left:1087.00px;top:408.00px;font-size:16px;color:#2a3f62;letter-spacing:0.249px;">More</div>
<svg style="left:1134px;top:411px" width="10" height="6"><path d="M1,1 L5,5 L9,1" fill="none" stroke="#2a3f62" stroke-width="2" stroke-linecap="round" stroke-linejoin="round"/></svg>
<div class="a" style="left:1165px;top:398px;width:150px;height:33px;background:#ebecf0;border-radius:3px"></div>
<svg style="left:1177px;top:404px" width="20" height="20" viewBox="0 0 20 20"><g fill="none" stroke="#253858"><circle cx="10" cy="9.8" r="8.5" stroke-width="1.5"/><path d="M10.3,5 V18.5 M5.8,8.5 V11.5 Q5.8,14.5 10.3,15.5 M13.8,8.5 Q13.8,11 10.3,12" stroke-width="1.3"/></g><g fill="#253858"><circle cx="10.3" cy="4.7" r="1.6"/><circle cx="5.8" cy="8.2" r="1.6"/><circle cx="13.8" cy="8.2" r="1.5"/></g></svg>
<div class="t" style="left:1201.30px;top:408.00px;font-size:16px;color:#2a3f62;letter-spacing:0.477px;">Object Graph</div>
<svg style="left:1800px;top:399px" width="47" height="32" viewBox="0 0 47 32"><rect x="12" y="0" width="23" height="9" fill="#ecebf6"/><rect x="6" y="2" width="5.5" height="6" fill="#7b50c8"/><rect x="35.5" y="2" width="5.5" height="6" fill="#7b50c8"/><rect x="0" y="7" width="47" height="19" rx="2" fill="#9675e0"/><rect x="0" y="16.5" width="47" height="9.5" rx="1" fill="#8556d2"/><circle cx="3.5" cy="11" r="1" fill="#3ad0e0"/><rect x="6" y="19.5" width="5.5" height="5" fill="#6c44b8"/><rect x="35.5" y="19.5" width="5.5" height="5" fill="#6c44b8"/><rect x="12" y="21" width="23" height="11" fill="#ecebf6"/><path d="M14,26 H33 M14,29 H33" stroke="#c9c8dc" stroke-width="1.2"/></svg>
<svg style="left:1857px;top:398px" width="35" height="34" viewBox="0 0 35 35" preserveAspectRatio="none" shape-rendering="crispEdges"><g fill="#111"><rect x="7" y="0" width="1" height="1"/><rect x="8" y="0" width="1" height="1"/><rect x="10" y="0" width="1" height="1"/><rect x="12" y="0" width="1" height="1"/><rect x="13" y="0" width="1" height="1"/><rect x="14" y="0" width="1" height="1"/><rect x="15" y="0" width="1" height="1"/><rect x="16" y="0" width="1" height="1"/><rect x="17" y="0" width="1" height="1"/><rect x="18" y="0" width="1" height="1"/><rect x="19" y="0" width="1" height="1"/><rect x="21" y="0" width="1" height="1"/><rect x="22" y="0" width="1" height="1"/><rect x="26" y="0" width="1" height="1"/><rect x="7" y="1" width="1" height="1"/><rect x="9" y="1" width="1" height="1"/><rect x="10" y="1" width="1" height="1"/><rect x="11" y="1" width="1" height="1"/><rect x="12" y="1" width="1" height="1"/><rect x="14" y="1" width="1" height="1"/><rect x="17" y="1" width="1" height="1"/><rect x="19" y="1" width="1" height="1"/><rect x="20" y="1" width="1" height="1"/><rect x="21" y="1" width="1" height="1"/><rect x="23" y="1" width="1" height="1"/><rect x="24" y="1" width="1" height="1"/><rect x="26" y="1" width="1" height="1"/><rect x="27" y="1" width="1" height="1"/><rect x="9" y="2" width="1" height="1"/><rect x="14" y="2" width="1" height="1"/><rect x="16" y="2" width="1" height="1"/><rect x="17" y="2" width="1" height="1"/><rect x="19" y="2" width="1" height="1"/><rect x="20" y="2" width="1" height="1"/><rect x="21" y="2" width="1" height="1"/><rect x="26" y="2" width="1" height="1"/><rect x="9" y="3" width="1" height="1"/><rect x="12" y="3" width="1" height="1"/><rect x="14" y="3" width="1" height="1"/><rect x="19" y="3" width="1" height="1"/><rect x="20" y="3" width="1" height="1"/><rect x="22" y="3" width="1" height="1"/><rect x="23" y="3" width="1" height="1"/><rect x="24" y="3" width="1" height="1"/><rect x="25" y="3" width="1" height="1"/><rect x="26" y="3" width="1" height="1"/><rect x="7" y="4" width="1" height="1"/><rect x="8" y="4" width="1" height="1"/><rect x="9" y="4" width="1" height="1"/><rect x="11" y="4" width="1" height="1"/><rect x="12" y="4" width="1" height="1"/><rect x="17" y="4" width="1" height="1"/><rect x="18" y="4" width="1" height="1"/><rect x="19" y="4" width="1" height="1"/><rect x="22" y="4" width="1" height="1"/><rect x="23" y="4" width="1" height="1"/><rect x="24" y="4" width="1" height="1"/><rect x="25" y="4" width="1" height="1"/><rect x="26" y="4" width="1" height="1"/><rect x="7" y="5" width="1" height="1"/><rect x="8" y="5" width="1" height="1"/><rect x="9" y="5" width="1" height="1"/><rect x="10" y="5" width="1" height="1"/><rect x="14" y="5" width="1" height="1"/><rect x="17" y="5" width="1" height="1"/><rect x="22" y="5" width="1" height="1"/><rect x="23" y="5" width="1" height="1"/><rect x="24" y="5" width="1" height="1"/><rect x="26" y="5" width="1" height="1"/><rect x="27" y="5" width="1" height="1"/><rect x="7" y="6" width="1" height="1"/><rect x="8" y="6" width="1" height="1"/><rect x="9" y="6" width="1" height="1"/><rect x="10" y="6" width="1" height="1"/><rect x="11" y="6" width="1" height="1"/><rect x="12" y="6" width="1" height="1"/><rect x="13" y="6" width="1" height="1"/><rect x="14" y="6" width="1" height="1"/><rect x="15" y="6" width="1" height="1"/><rect x="18" y="6" width="1" height="1"/><rect x="19" y="6" width="1" height="1"/><rect x="20" y="6" width="1" height="1"/><rect x="21" y="6" width="1" height="1"/><rect x="22" y="6" width="1" height="1"/><rect x="25" y="6" width="1" height="1"/><rect x="26" y="6" width="1" height="1"/><rect x="27" y="6" width="1" height="1"/><rect x="0" y="7" width="1" height="1"/><rect x="1" y="7" width="1" height="1"/><rect x="2" y="7" width="1" height="1"/><rect x="4" y="7" width="1" height="1"/><rect x="5" y="7" width="1" height="1"/><rect x="8" y="7" width="1" height="1"/><rect x="10" y="7" width="1" height="1"/><rect x="15" y="7" width="1" height="1"/><rect x="16" y="7" width="1" height="1"/><rect x="17" y="7" width="1" height="1"/><rect x="21" y="7" width="1" height="1"/><rect x="22" y="7" width="1" height="1"/><rect x="29" y="7" width="1" height="1"/><rect x="30" y="7" width="1" height="1"/><rect x="31" y="7" width="1" height="1"/><rect x="32" y="7" width="1" height="1"/><rect x="33" y="7" width="1" height="1"/><rect x="34" y="7" width="1" height="1"/><rect x="0" y="8" width="1" height="1"/><rect x="3" y="8" width="1" height="1"/><rect x="7" y="8" width="1" height="1"/><rect x="8" y="8" width="1" height="1"/><rect x="9" y="8" width="1" height="1"/><rect x="10" y="8" width="1" height="1"/><rect x="11" y="8" width="1" height="1"/><rect x="15" y="8" width="1" height="1"/><rect x="18" y="8" width="1" height="1"/><rect x="23" y="8" width="1" height="1"/><rect x="24" y="8" width="1" height="1"/><rect x="26" y="8" width="1" height="1"/><rect x="29" y="8" width="1" height="1"/><rect x="30" y="8" width="1" height="1"/><rect x="33" y="8" width="1" height="1"/><rect x="34" y="8" width="1" height="1"/><rect x="0" y="9" width="1" height="1"/><rect x="3" y="9" width="1" height="1"/><rect x="7" y="9" width="1" height="1"/><rect x="9" y="9" width="1" height="1"/><rect x="10" y="9" width="1" height="1"/><rect x="15" y="9" width="1" height="1"/><rect x="18" y="9" width="1" height="1"/><rect x="19" y="9" width="1" height="1"/><rect x="20" y="9" width="1" height="1"/><rect x="21" y="9" width="1" height="1"/><rect x="23" y="9" width="1" height="1"/><rect x="24" y="9" width="1" height="1"/><rect x="25" y="9" width="1" height="1"/><rect x="27" y="9" width="1" height="1"/><rect x="28" y="9" width="1" height="1"/><rect x="31" y="9" width="1" height="1"/><rect x="33" y="9" width="1" height="1"/><rect x="1" y="10" width="1" height="1"/><rect x="2" y="10" width="1" height="1"/><rect x="3" y="10" width="1" height="1"/><rect x="4" y="10" width="1" height="1"/><rect x="6" y="10" width="1" height="1"/><rect x="7" y="10" width="1" height="1"/><rect x="10" y="10" width="1" height="1"/><rect x="11" y="10" width="1" height="1"/><rect x="14" y="10" width="1" height="1"/><rect x="16" y="10" width="1" height="1"/><rect x="17" y="10" width="1" height="1"/><rect x="19" y="10" width="1" height="1"/><rect x="23" y="10" width="1" height="1"/><rect x="25" y="10" width="1" height="1"/><rect x="26" y="10" width="1" height="1"/><rect x="28" y="10" width="1" height="1"/><rect x="30" y="10" width="1" height="1"/><rect x="0" y="11" width="1" height="1"/><rect x="4" y="11" width="1" height="1"/><rect x="5" y="11" width="1" height="1"/><rect x="6" y="11" width="1" height="1"/><rect x="7" y="11" width="1" height="1"/><rect x="8" y="11" width="1" height="1"/><rect x="9" y="11" width="1" height="1"/><rect x="13" y="11" width="1" height="1"/><rect x="16" y="11" width="1" height="1"/><rect x="19" y="11" width="1" height="1"/><rect x="21" y="11" width="1" height="1"/><rect x="22" y="11" width="1" height="1"/><rect x="25" y="11" width="1" height="1"/><rect x="26" y="11" width="1" height="1"/><rect x="27" y="11" width="1" height="1"/><rect x="28" y="11" width="1" height="1"/><rect x="29" y="11" width="1" height="1"/><rect x="30" y="11" width="1" height="1"/><rect x="32" y="11" width="1" height="1"/><rect x="34" y="11" width="1" height="1"/><rect x="0" y="12" width="1" height="1"/><rect x="1" y="12" width="1" height="1"/><rect x="3" y="12" width="1" height="1"/><rect x="4" y="12" width="1" height="1"/><rect x="8" y="12" width="1" height="1"/><rect x="9" y="12" width="1" height="1"/><rect x="10" y="12" width="1" height="1"/><rect x="12" y="12" width="1" height="1"/><rect x="13" y="12" width="1" height="1"/><rect x="14" y="12" width="1" height="1"/><rect x="17" y="12" width="1" height="1"/><rect x="18" y="12" width="1" height="1"/><rect x="22" y="12" width="1" height="1"/><rect x="23" y="12" width="1" height="1"/><rect x="25" y="12" width="1" height="1"/><rect x="26" y="12" width="1" height="1"/><rect x="30" y="12" width="1" height="1"/><rect x="32" y="12" width="1" height="1"/><rect x="34" y="12" width="1" height="1"/><rect x="0" y="13" width="1" height="1"/><rect x="3" y="13" width="1" height="1"/><rect x="4" y="13" width="1" height="1"/><rect x="6" y="13" width="1" height="1"/><rect x="7" y="13" width="1" height="1"/><rect x="8" y="13" width="1" height="1"/><rect x="9" y="13" width="1" height="1"/><rect x="10" y="13" width="1" height="1"/><rect x="11" y="13" width="1" height="1"/><rect x="12" y="13" width="1" height="1"/><rect x="14" y="13" width="1" height="1"/><rect x="15" y="13" width="1" height="1"/><rect x="16" y="13" width="1" height="1"/><rect x="17" y="13" width="1" height="1"/><rect x="18" y="13" width="1" height="1"/><rect x="19" y="13" width="1" height="1"/><rect x="20" y="13" width="1" height="1"/><rect x="23" y="13" width="1" height="1"/><rect x="24" y="13" width="1" height="1"/><rect x="26" y="13" width="1" height="1"/><rect x="28" y="13" width="1" height="1"/><rect x="29" y="13" width="1" height="1"/><rect x="31" y="13" width="1" height="1"/><rect x="32" y="13" width="1" height="1"/><rect x="0" y="14" width="1" height="1"/><rect x="4" y="14" width="1" height="1"/><rect x="5" y="14" width="1" height="1"/><rect x="6" y="14" width="1" height="1"/><rect x="7" y="14" width="1" height="1"/><rect x="8" y="14" width="1" height="1"/><rect x="10" y="14" width="1" height="1"/><rect x="11" y="14" width="1" height="1"/><rect x="12" y="14" width="1" height="1"/><rect x="16" y="14" width="1" height="1"/><rect x="17" y="14" width="1" height="1"/><rect x="18" y="14" width="1" height="1"/><rect x="19" y="14" width="1" height="1"/><rect x="20" y="14" width="1" height="1"/><rect x="21" y="14" width="1" height="1"/><rect x="22" y="14" width="1" height="1"/><rect x="26" y="14" width="1" height="1"/><rect x="28" y="14" width="1" height="1"/><rect x="29" y="14" width="1" height="1"/><rect x="30" y="14" width="1" height="1"/><rect x="31" y="14" width="1" height="1"/><rect x="32" y="14" width="1" height="1"/><rect x="33" y="14" width="1" height="1"/><rect x="34" y="14" width="1" height="1"/><rect x="0" y="15" width="1" height="1"/><rect x="1" y="15" width="1" height="1"/><rect x="2" y="15" width="1" height="1"/><rect x="3" y="15" width="1" height="1"/><rect x="4" y="15" width="1" height="1"/><rect x="5" y="15" width="1" height="1"/><rect x="6" y="15" width="1" height="1"/><rect x="7" y="15" width="1" height="1"/><rect x="8" y="15" width="1" height="1"/><rect x="15" y="15" width="1" height="1"/><rect x="16" y="15" width="1" height="1"/><rect x="18" y="15" width="1" height="1"/><rect x="21" y="15" width="1" height="1"/><rect x="27" y="15" width="1" height="1"/><rect x="29" y="15" width="1" height="1"/><rect x="2" y="16" width="1" height="1"/><rect x="3" y="16" width="1" height="1"/><rect x="4" y="16" width="1" height="1"/><rect x="5" y="16" width="1" height="1"/><rect x="6" y="16" width="1" height="1"/><rect x="12" y="16" width="1" height="1"/><rect x="13" y="16" width="1" height="1"/><rect x="16" y="16" width="1" height="1"/><rect x="19" y="16" width="1" height="1"/><rect x="21" y="16" width="1" height="1"/><rect x="22" y="16" width="1" height="1"/><rect x="23" y="16" width="1" height="1"/><rect x="25" y="16" width="1" height="1"/><rect x="28" y="16" width="1" height="1"/><rect x="29" y="16" width="1" height="1"/><rect x="30" y="16" width="1" height="1"/><rect x="0" y="17" width="1" height="1"/><rect x="1" y="17" width="1" height="1"/><rect x="2" y="17" width="1" height="1"/><rect x="4" y="17" width="1" height="1"/><rect x="6" y="17" width="1" height="1"/><rect x="7" y="17" width="1" height="1"/><rect x="8" y="17" width="1" height="1"/><rect x="12" y="17" width="1" height="1"/><rect x="13" y="17" width="1" height="1"/><rect x="14" y="17" width="1" height="1"/><rect x="15" y="17" width="1" height="1"/><rect x="16" y="17" width="1" height="1"/><rect x="18" y="17" width="1" height="1"/><rect x="21" y="17" width="1" height="1"/><rect x="22" y="17" width="1" height="1"/><rect x="25" y="17" width="1" height="1"/><rect x="26" y="17" width="1" height="1"/><rect x="27" y="17" width="1" height="1"/><rect x="29" y="17" width="1" height="1"/><rect x="31" y="17" width="1" height="1"/><rect x="34" y="17" width="1" height="1"/><rect x="1" y="18" width="1" height="1"/><rect x="4" y="18" width="1" height="1"/><rect x="6" y="18" width="1" height="1"/><rect x="7" y="18" width="1" height="1"/><rect x="8" y="18" width="1" height="1"/><rect x="9" y="18" width="1" height="1"/><rect x="10" y="18" width="1" height="1"/><rect x="11" y="18" width="1" height="1"/><rect x="12" y="18" width="1" height="1"/><rect x="13" y="18" width="1" height="1"/><rect x="14" y="18" width="1" height="1"/><rect x="16" y="18" width="1" height="1"/><rect x="19" y="18" width="1" height="1"/><rect x="23" y="18" width="1" height="1"/><rect x="24" y="18" width="1" height="1"/><rect x="25" y="18" width="1" height="1"/><rect x="28" y="18" width="1" height="1"/><rect x="29" y="18" width="1" height="1"/><rect x="30" y="18" width="1" height="1"/><rect x="31" y="18" width="1" height="1"/><rect x="32" y="18" width="1" height="1"/><rect x="34" y="18" width="1" height="1"/><rect x="1" y="19" width="1" height="1"/><rect x="2" y="19" width="1" height="1"/><rect x="3" y="19" width="1" height="1"/><rect x="4" y="19" width="1" height="1"/><rect x="5" y="19" width="1" height="1"/><rect x="14" y="19" width="1" height="1"/><rect x="16" y="19" width="1" height="1"/><rect x="19" y="19" width="1" height="1"/><rect x="20" y="19" width="1" height="1"/><rect x="22" y="19" width="1" height="1"/><rect x="23" y="19" width="1" height="1"/><rect x="24" y="19" width="1" height="1"/><rect x="25" y="19" width="1" height="1"/><rect x="28" y="19" width="1" height="1"/><rect x="30" y="19" width="1" height="1"/><rect x="32" y="19" width="1" height="1"/><rect x="33" y="19" width="1" height="1"/><rect x="34" y="19" width="1" height="1"/><rect x="0" y="20" width="1" height="1"/><rect x="2" y="20" width="1" height="1"/><rect x="3" y="20" width="1" height="1"/><rect x="6" y="20" width="1" height="1"/><rect x="7" y="20" width="1" height="1"/><rect x="8" y="20" width="1" height="1"/><rect x="9" y="20" width="1" height="1"/><rect x="10" y="20" width="1" height="1"/><rect x="11" y="20" width="1" height="1"/><rect x="12" y="20" width="1" height="1"/><rect x="13" y="20" width="1" height="1"/><rect x="17" y="20" width="1" height="1"/><rect x="18" y="20" width="1" height="1"/><rect x="20" y="20" width="1" height="1"/><rect x="21" y="20" width="1" height="1"/><rect x="22" y="20" width="1" height="1"/><rect x="23" y="20" width="1" height="1"/><rect x="25" y="20" width="1" height="1"/><rect x="26" y="20" width="1" height="1"/><rect x="29" y="20" width="1" height="1"/><rect x="30" y="20" width="1" height="1"/><rect x="31" y="20" width="1" height="1"/><rect x="32" y="20" width="1" height="1"/><rect x="33" y="20" width="1" height="1"/><rect x="2" y="21" width="1" height="1"/><rect x="3" y="21" width="1" height="1"/><rect x="6" y="21" width="1" height="1"/><rect x="8" y="21" width="1" height="1"/><rect x="9" y="21" width="1" height="1"/><rect x="14" y="21" width="1" height="1"/><rect x="15" y="21" width="1" height="1"/><rect x="16" y="21" width="1" height="1"/><rect x="23" y="21" width="1" height="1"/><rect x="25" y="21" width="1" height="1"/><rect x="27" y="21" width="1" height="1"/><rect x="30" y="21" width="1" height="1"/><rect x="31" y="21" width="1" height="1"/><rect x="32" y="21" width="1" height="1"/><rect x="0" y="22" width="1" height="1"/><rect x="1" y="22" width="1" height="1"/><rect x="4" y="22" width="1" height="1"/><rect x="5" y="22" width="1" height="1"/><rect x="7" y="22" width="1" height="1"/><rect x="8" y="22" width="1" height="1"/><rect x="9" y="22" width="1" height="1"/><rect x="13" y="22" width="1" height="1"/><rect x="14" y="22" width="1" height="1"/><rect x="15" y="22" width="1" height="1"/><rect x="18" y="22" width="1" height="1"/><rect x="19" y="22" width="1" height="1"/><rect x="20" y="22" width="1" height="1"/><rect x="22" y="22" width="1" height="1"/><rect x="23" y="22" width="1" height="1"/><rect x="26" y="22" width="1" height="1"/><rect x="27" y="22" width="1" height="1"/><rect x="28" y="22" width="1" height="1"/><rect x="29" y="22" width="1" height="1"/><rect x="31" y="22" width="1" height="1"/><rect x="34" y="22" width="1" height="1"/><rect x="0" y="23" width="1" height="1"/><rect x="2" y="23" width="1" height="1"/><rect x="4" y="23" width="1" height="1"/><rect x="5" y="23" width="1" height="1"/><rect x="7" y="23" width="1" height="1"/><rect x="9" y="23" width="1" height="1"/><rect x="10" y="23" width="1" height="1"/><rect x="11" y="23" width="1" height="1"/><rect x="12" y="23" width="1" height="1"/><rect x="15" y="23" width="1" height="1"/><rect x="16" y="23" width="1" height="1"/><rect x="17" y="23" width="1" height="1"/><rect x="19" y="23" width="1" height="1"/><rect x="20" y="23" width="1" height="1"/><rect x="21" y="23" width="1" height="1"/><rect x="22" y="23" width="1" height="1"/><rect x="28" y="23" width="1" height="1"/><rect x="29" y="23" width="1" height="1"/><rect x="32" y="23" width="1" height="1"/><rect x="34" y="23" width="1" height="1"/><rect x="0" y="24" width="1" height="1"/><rect x="1" y="24" width="1" height="1"/><rect x="2" y="24" width="1" height="1"/><rect x="3" y="24" width="1" height="1"/><rect x="4" y="24" width="1" height="1"/><rect x="5" y="24" width="1" height="1"/><rect x="7" y="24" width="1" height="1"/><rect x="9" y="24" width="1" height="1"/><rect x="10" y="24" width="1" height="1"/><rect x="13" y="24" width="1" height="1"/><rect x="14" y="24" width="1" height="1"/><rect x="15" y="24" width="1" height="1"/><rect x="16" y="24" width="1" height="1"/><rect x="18" y="24" width="1" height="1"/><rect x="19" y="24" width="1" height="1"/><rect x="21" y="24" width="1" height="1"/><rect x="22" y="24" width="1" height="1"/><rect x="25" y="24" width="1" height="1"/><rect x="26" y="24" width="1" height="1"/><rect x="27" y="24" width="1" height="1"/><rect x="29" y="24" width="1" height="1"/><rect x="32" y="24" width="1" height="1"/><rect x="33" y="24" width="1" height="1"/><rect x="1" y="25" width="1" height="1"/><rect x="3" y="25" width="1" height="1"/><rect x="4" y="25" width="1" height="1"/><rect x="5" y="25" width="1" height="1"/><rect x="10" y="25" width="1" height="1"/><rect x="11" y="25" width="1" height="1"/><rect x="12" y="25" width="1" height="1"/><rect x="15" y="25" width="1" height="1"/><rect x="16" y="25" width="1" height="1"/><rect x="17" y="25" width="1" height="1"/><rect x="18" y="25" width="1" height="1"/><rect x="20" y="25" width="1" height="1"/><rect x="26" y="25" width="1" height="1"/><rect x="27" y="25" width="1" height="1"/><rect x="28" y="25" width="1" height="1"/><rect x="30" y="25" width="1" height="1"/><rect x="31" y="25" width="1" height="1"/><rect x="33" y="25" width="1" height="1"/><rect x="34" y="25" width="1" height="1"/><rect x="0" y="26" width="1" height="1"/><rect x="2" y="26" width="1" height="1"/><rect x="6" y="26" width="1" height="1"/><rect x="7" y="26" width="1" height="1"/><rect x="8" y="26" width="1" height="1"/><rect x="9" y="26" width="1" height="1"/><rect x="11" y="26" width="1" height="1"/><rect x="12" y="26" width="1" height="1"/><rect x="13" y="26" width="1" height="1"/><rect x="19" y="26" width="1" height="1"/><rect x="21" y="26" width="1" height="1"/><rect x="23" y="26" width="1" height="1"/><rect x="25" y="26" width="1" height="1"/><rect x="26" y="26" width="1" height="1"/><rect x="27" y="26" width="1" height="1"/><rect x="28" y="26" width="1" height="1"/><rect x="31" y="26" width="1" height="1"/><rect x="32" y="26" width="1" height="1"/><rect x="34" y="26" width="1" height="1"/><rect x="0" y="27" width="1" height="1"/><rect x="4" y="27" width="1" height="1"/><rect x="5" y="27" width="1" height="1"/><rect x="9" y="27" width="1" height="1"/><rect x="10" y="27" width="1" height="1"/><rect x="11" y="27" width="1" height="1"/><rect x="12" y="27" width="1" height="1"/><rect x="16" y="27" width="1" height="1"/><rect x="18" y="27" width="1" height="1"/><rect x="19" y="27" width="1" height="1"/><rect x="22" y="27" width="1" height="1"/><rect x="25" y="27" width="1" height="1"/><rect x="26" y="27" width="1" height="1"/><rect x="27" y="27" width="1" height="1"/><rect x="28" y="27" width="1" height="1"/><rect x="29" y="27" width="1" height="1"/><rect x="32" y="27" width="1" height="1"/><rect x="33" y="27" width="1" height="1"/><rect x="34" y="27" width="1" height="1"/><rect x="8" y="28" width="1" height="1"/><rect x="9" y="28" width="1" height="1"/><rect x="10" y="28" width="1" height="1"/><rect x="13" y="28" width="1" height="1"/><rect x="14" y="28" width="1" height="1"/><rect x="15" y="28" width="1" height="1"/><rect x="18" y="28" width="1" height="1"/><rect x="19" y="28" width="1" height="1"/><rect x="21" y="28" width="1" height="1"/><rect x="22" y="28" width="1" height="1"/><rect x="23" y="28" width="1" height="1"/><rect x="25" y="28" width="1" height="1"/><rect x="27" y="28" width="1" height="1"/><rect x="28" y="28" width="1" height="1"/><rect x="31" y="28" width="1" height="1"/><rect x="32" y="28" width="1" height="1"/><rect x="34" y="28" width="1" height="1"/><rect x="7" y="29" width="1" height="1"/><rect x="9" y="29" width="1" height="1"/><rect x="11" y="29" width="1" height="1"/><rect x="13" y="29" width="1" height="1"/><rect x="14" y="29" width="1" height="1"/><rect x="15" y="29" width="1" height="1"/><rect x="19" y="29" width="1" height="1"/><rect x="21" y="29" width="1" height="1"/><rect x="22" y="29" width="1" height="1"/><rect x="23" y="29" width="1" height="1"/><rect x="24" y="29" width="1" height="1"/><rect x="27" y="29" width="1" height="1"/><rect x="28" y="29" width="1" height="1"/><rect x="31" y="29" width="1" height="1"/><rect x="32" y="29" width="1" height="1"/><rect x="7" y="30" width="1" height="1"/><rect x="8" y="30" width="1" height="1"/><rect x="10" y="30" width="1" height="1"/><rect x="14" y="30" width="1" height="1"/><rect x="16" y="30" width="1" height="1"/><rect x="17" y="30" width="1" height="1"/><rect x="20" y="30" width="1" height="1"/><rect x="21" y="30" width="1" height="1"/><rect x="22" y="30" width="1" height="1"/><rect x="23" y="30" width="1" height="1"/><rect x="24" y="30" width="1" height="1"/><rect x="25" y="30" width="1" height="1"/><rect x="26" y="30" width="1" height="1"/><rect x="29" y="30" width="1" height="1"/><rect x="32" y="30" width="1" height="1"/><rect x="34" y="30" width="1" height="1"/><rect x="10" y="31" width="1" height="1"/><rect x="11" y="31" width="1" height="1"/><rect x="13" y="31" width="1" height="1"/><rect x="15" y="31" width="1" height="1"/><rect x="16" y="31" width="1" height="1"/><rect x="17" y="31" width="1" height="1"/><rect x="19" y="31" width="1" height="1"/><rect x="20" y="31" width="1" height="1"/><rect x="23" y="31" width="1" height="1"/><rect x="24" y="31" width="1" height="1"/><rect x="25" y="31" width="1" height="1"/><rect x="26" y="31" width="1" height="1"/><rect x="27" y="31" width="1" height="1"/><rect x="28" y="31" width="1" height="1"/><rect x="29" y="31" width="1" height="1"/><rect x="30" y="31" width="1" height="1"/><rect x="31" y="31" width="1" height="1"/><rect x="32" y="31" width="1" height="1"/><rect x="34" y="31" width="1" height="1"/><rect x="9" y="32" width="1" height="1"/><rect x="10" y="32" width="1" height="1"/><rect x="11" y="32" width="1" height="1"/><rect x="12" y="32" width="1" height="1"/><rect x="14" y="32" width="1" height="1"/><rect x="19" y="32" width="1" height="1"/><rect x="21" y="32" width="1" height="1"/><rect x="24" y="32" width="1" height="1"/><rect x="27" y="32" width="1" height="1"/><rect x="28" y="32" width="1" height="1"/><rect x="30" y="32" width="1" height="1"/><rect x="32" y="32" width="1" height="1"/><rect x="34" y="32" width="1" height="1"/><rect x="7" y="33" width="1" height="1"/><rect x="9" y="33" width="1" height="1"/><rect x="10" y="33" width="1" height="1"/><rect x="11" y="33" width="1" height="1"/><rect x="12" y="33" width="1" height="1"/><rect x="13" y="33" width="1" height="1"/><rect x="14" y="33" width="1" height="1"/><rect x="15" y="33" width="1" height="1"/><rect x="19" y="33" width="1" height="1"/><rect x="21" y="33" width="1" height="1"/><rect x="24" y="33" width="1" height="1"/><rect x="29" y="33" width="1" height="1"/><rect x="32" y="33" width="1" height="1"/><rect x="34" y="33" width="1" height="1"/><rect x="9" y="34" width="1" height="1"/><rect x="11" y="34" width="1" height="1"/><rect x="12" y="34" width="1" height="1"/><rect x="14" y="34" width="1" height="1"/><rect x="16" y="34" width="1" height="1"/><rect x="21" y="34" width="1" height="1"/><rect x="22" y="34" width="1" height="1"/><rect x="23" y="34" width="1" height="1"/><rect x="24" y="34" width="1" height="1"/><rect x="26" y="34" width="1" height="1"/><rect x="27" y="34" width="1" height="1"/><rect x="29" y="34" width="1" height="1"/><rect x="30" y="34" width="1" height="1"/><rect x="32" y="34" width="1" height="1"/><rect x="33" y="34" width="1" height="1"/><rect x="34" y="34" width="1" height="1"/><rect x="0.00" y="0.00" width="7.00" height="7.00"/><rect x="1.00" y="1.00" width="5.00" height="5.00" fill="#fff"/><rect x="2.00" y="2.00" width="3.00" height="3.00"/><rect x="28.00" y="0.00" width="7.00" height="7.00"/><rect x="29.00" y="1.00" width="5.00" height="5.00" fill="#fff"/><rect x="30.00" y="2.00" width="3.00" height="3.00"/><rect x="0.00" y="28.00" width="7.00" height="7.00"/><rect x="1.00" y="29.00" width="5.00" height="5.00" fill="#fff"/><rect x="2.00" y="30.00" width="3.00" height="3.00"/></g></svg>
<div class="a" style="left:1903px;top:398px;width:125px;height:33px;background:#ebecf0;border-radius:3px"></div>
<svg style="left:1917px;top:408px" width="16" height="12" viewBox="0 0 16 12"><path d="M0.5,6 Q8,-3.5 15.5,6 Q8,15.5 0.5,6 Z" fill="#253858"/><circle cx="8" cy="6" r="2.6" fill="#fff"/><circle cx="8" cy="6" r="1.2" fill="#253858"/></svg>
<div class="t" style="left:1939.70px;top:407.00px;font-size:16.5px;color:#253858;letter-spacing:-0.012px;">Watch</div>
<div class="a" style="left:1990px;top:407px;width:25px;height:17px;background:#c1c2c6;border-radius:9px"></div>
<div class="t" style="left:1999.00px;top:410.00px;font-size:12px;color:#333;font-weight:700;letter-spacing:0.4px;">0</div>
<div class="a" style="left:854px;top:466px;width:16px;height:16px;background:#ebecf0;border-radius:3px"></div>
<svg style="left:857px;top:471px" width="10" height="6"><path d="M1,1 L5,5 L9,1" fill="none" stroke="#344563" stroke-width="2" stroke-linecap="round" stroke-linejoin="round"/></svg>
<div class="t" style="left:876.20px;top:467.00px;font-size:18.5px;color:#172b4d;letter-spacing:0.242px;-webkit-text-stroke:0.35px #172b4d;">Details</div>
<div class="t" style="left:860.40px;top:505.00px;font-size:16px;color:#6b6b6b;letter-spacing:-0.927px;">Name</div>
<svg style="left:907px;top:504px" width="16" height="16" viewBox="0 0 16 16"><path d="M1,2.5 V7.3 L8.7,15 L15,8.7 L7.3,1 H2.5 Z" fill="#707070"/><circle cx="4.6" cy="4.6" r="1.4" fill="#fff"/></svg>
<svg style="left:1148.5px;top:504.5px" width="15" height="16" viewBox="0 0 36 48" preserveAspectRatio="none"><rect x="0" y="0" width="36" height="48" rx="5" fill="#37474f"/><rect x="4" y="4" width="28" height="37" rx="1.5" fill="#b3dcfa"/></svg>
<div class="t" style="left:1170.40px;top:505.00px;font-size:16px;color:#0052cc;letter-spacing:-0.154px;">iPhone SN: 12345678</div>
<div class="t" style="left:860.40px;top:533.00px;font-size:16px;color:#6b6b6b;letter-spacing:-0.22px;">Model</div>
<div class="t" style="left:1148.50px;top:533.00px;font-size:16px;color:#172b4d;letter-spacing:-0.354px;">8 Plus</div>
<div class="t" style="left:860.40px;top:562.00px;font-size:16px;color:#6b6b6b;letter-spacing:-0.18px;">Serial Number</div>
<div class="t" style="left:1148.50px;top:562.00px;font-size:16px;color:#172b4d;letter-spacing:-0.098px;">12345678</div>
<div class="a" style="left:854px;top:602.5px;width:16px;height:16px;background:#ebecf0;border-radius:3px"></div>
<svg style="left:857px;top:607.5px" width="10" height="6"><path d="M1,1 L5,5 L9,1" fill="none" stroke="#344563" stroke-width="2" stroke-linecap="round" stroke-linejoin="round"/></svg>
<div class="t" style="left:876.20px;top:603.00px;font-size:18.5px;color:#172b4d;letter-spacing:0.702px;-webkit-text-stroke:0.35px #172b4d;">Activity</div>
<div class="a" style="left:872px;top:659px;width:765px;height:2.5px;background:#ebecf0;"></div>
<div class="t" style="left:871.80px;top:638.00px;font-size:16px;color:#42526e;letter-spacing:-0.093px;-webkit-text-stroke:0.25px #42526e;">Comments</div>
<div class="t" style="left:972.60px;top:638.00px;font-size:16px;color:#0052cc;letter-spacing:0.386px;-webkit-text-stroke:0.25px #0052cc;">History</div>
<div class="a" style="left:971.5px;top:658.5px;width:53px;height:3px;background:#0052cc;border-radius:1px"></div>
<svg style="left:1636px;top:632px" width="10" height="14" viewBox="0 0 10 14"><path d="M5,0.5 V12.5 M1,8.5 L5,12.5 L9,8.5" fill="none" stroke="#5e6c84" stroke-width="1.8"/></svg>
<div class="a" style="left:839.5px;top:656px;width:1.5px;height:2px;background:#a0a0a0;"></div>
<div class="a" style="left:839.5px;top:660px;width:1.5px;height:2px;background:#a0a0a0;"></div>
<div class="a" style="left:839.5px;top:664px;width:1.5px;height:2px;background:#a0a0a0;"></div>
<div class="t" style="left:882.90px;top:685.00px;font-size:14px;color:#8c8c8c;font-weight:700;letter-spacing:0.378px;">Created</div>
<div class="t" style="left:1052.80px;top:685.00px;font-size:14px;color:#8c8c8c;font-weight:700;letter-spacing:0.321px;">Type</div>
<div class="t" style="left:1167.80px;top:685.00px;font-size:14px;color:#8c8c8c;font-weight:700;letter-spacing:0.085px;">Actor</div>
<div class="t" style="left:1335.70px;top:685.00px;font-size:14px;color:#8c8c8c;font-weight:700;letter-spacing:0.309px;">Attribute</div>
<div class="t" style="left:1461.00px;top:685.00px;font-size:14px;color:#8c8c8c;font-weight:700;letter-spacing:0.048px;">Old value</div>
<div class="t" style="left:1550.60px;top:685.00px;font-size:14px;color:#8c8c8c;font-weight:700;letter-spacing:0.191px;">New value</div>
<div class="a" style="left:872px;top:709.5px;width:765px;height:2px;background:#e4e5e8;"></div>
<div class="a" style="left:872px;top:751px;width:765px;height:1.5px;background:#e4e5e8;"></div>
<div class="a" style="left:872px;top:792px;width:765px;height:1.5px;background:#e4e5e8;"></div>
<div class="a" style="left:872px;top:833px;width:765px;height:1.5px;background:#e4e5e8;"></div>
<div class="t" style="left:882.90px;top:723.00px;font-size:16px;color:#172b4d;letter-spacing:-0.175px;">02/Dec/20 12:31 PM</div>
<div class="t" style="left:1052.80px;top:723.00px;font-size:16px;color:#172b4d;letter-spacing:-0.195px;">Added Value</div>
<svg style="left:1162px;top:719.2px" width="25" height="25" viewBox="0 0 25 25"><circle cx="12.5" cy="12.5" r="12.5" fill="#2ea8e2"/><circle cx="5.9" cy="14" r="1.4" fill="#f7c27c"/><circle cx="19.1" cy="14" r="1.4" fill="#f7c27c"/><ellipse cx="12.5" cy="14.2" rx="6.5" ry="6.4" fill="#f7c27c"/><path d="M5.6,13.5 C5,6.5 9,4.3 12.8,4.6 C17.5,4.6 20.2,7.5 19.4,13 C18.6,10.5 17,9.3 15,9.8 C12.5,10.3 9.5,9 7.2,10.5 C6.5,11 6,12 5.6,13.5 Z" fill="#1d4f8f"/><circle cx="10.2" cy="14.3" r="0.9" fill="#2b3b58"/><circle cx="14.8" cy="14.3" r="0.9" fill="#2b3b58"/><path d="M10.2,16.8 Q12.5,20.2 14.8,16.8 Z" fill="#2b3b58"/><path d="M10.4,16.8 H14.6 L14.3,17.6 H10.7 Z" fill="#fff"/></svg>
<div class="t" style="left:1192.70px;top:726.00px;font-size:16px;color:#0052cc;letter-spacing:-0.149px;">Captain Joe</div>
<div class="t" style="left:1335.70px;top:723.00px;font-size:16px;color:#172b4d;letter-spacing:-0.171px;">Serial Number</div>
<div class="t" style="left:1550.60px;top:723.00px;font-size:16px;color:#0052cc;letter-spacing:-0.012px;">12345678</div>
<div class="t" style="left:882.90px;top:764.00px;font-size:16px;color:#172b4d;letter-spacing:-0.175px;">02/Dec/20 12:31 PM</div>
<div class="t" style="left:1052.80px;top:764.00px;font-size:16px;color:#172b4d;letter-spacing:-0.195px;">Added Value</div>
<svg style="left:1162px;top:760.2px" width="25" height="25" viewBox="0 0 25 25"><circle cx="12.5" cy="12.5" r="12.5" fill="#2ea8e2"/><circle cx="5.9" cy="14" r="1.4" fill="#f7c27c"/><circle cx="19.1" cy="14" r="1.4" fill="#f7c27c"/><ellipse cx="12.5" cy="14.2" rx="6.5" ry="6.4" fill="#f7c27c"/><path d="M5.6,13.5 C5,6.5 9,4.3 12.8,4.6 C17.5,4.6 20.2,7.5 19.4,13 C18.6,10.5 17,9.3 15,9.8 C12.5,10.3 9.5,9 7.2,10.5 C6.5,11 6,12 5.6,13.5 Z" fill="#1d4f8f"/><circle cx="10.2" cy="14.3" r="0.9" fill="#2b3b58"/><circle cx="14.8" cy="14.3" r="0.9" fill="#2b3b58"/><path d="M10.2,16.8 Q12.5,20.2 14.8,16.8 Z" fill="#2b3b58"/><path d="M10.4,16.8 H14.6 L14.3,17.6 H10.7 Z" fill="#fff"/></svg>
<div class="t" style="left:1192.70px;top:767.00px;font-size:16px;color:#0052cc;letter-spacing:-0.149px;">Captain Joe</div>
<div class="t" style="left:1335.70px;top:764.00px;font-size:16px;color:#172b4d;letter-spacing:-0.17px;">Model</div>
<div class="t" style="left:1550.60px;top:764.00px;font-size:16px;color:#0052cc;letter-spacing:-0.354px;">8 Plus</div>
<div class="t" style="left:882.90px;top:805.00px;font-size:16px;color:#172b4d;letter-spacing:-0.175px;">02/Dec/20 12:31 PM</div>
<div class="t" style="left:1052.80px;top:805.00px;font-size:16px;color:#172b4d;letter-spacing:-0.287px;">Created</div>
<svg style="left:1162px;top:801.2px" width="25" height="25" viewBox="0 0 25 25"><circle cx="12.5" cy="12.5" r="12.5" fill="#f0323a"/><circle cx="5.9" cy="14" r="1.4" fill="#f7c27c"/><circle cx="19.1" cy="14" r="1.4" fill="#f7c27c"/><ellipse cx="12.5" cy="14.2" rx="6.5" ry="6.4" fill="#f7c27c"/><path d="M5.4,12.5 C5.2,6.5 9,4.2 13,4.3 C17.5,4.2 20.3,6.8 19.6,11.5 C17.5,9.6 14.5,9.2 11.5,9.6 C9,9.9 7,10.8 5.4,12.5 Z" fill="#fff"/><circle cx="10.2" cy="14" r="0.9" fill="#2b3b58"/><circle cx="14.8" cy="14" r="0.9" fill="#2b3b58"/><path d="M8.6,17.5 Q12.5,14.8 16.4,17.5 Q12.5,16.8 8.6,17.5 Z" fill="#fff"/><path d="M10.5,17.6 Q12.5,20.6 14.5,17.6 Z" fill="#1d3d7a"/></svg>
<div class="t" style="left:1192.70px;top:808.00px;font-size:16px;color:#0052cc;letter-spacing:-0.135px;">Master Engineer</div>
<div class="a" style="left:860px;top:846px;width:122px;height:33px;background:#ebecf0;border-radius:3px"></div>
<svg style="left:873.5px;top:855px" width="16" height="16" viewBox="0 0 16 16"><ellipse cx="8" cy="7.5" rx="7" ry="5.9" fill="none" stroke="#253858" stroke-width="1.9"/><path d="M10.5,12.2 L15,14.6 L13.2,10.8 Z" fill="#253858"/></svg>
<div class="t" style="left:895.70px;top:856.00px;font-size:16px;color:#2a3f62;letter-spacing:0.491px;">Comment</div>
<div class="a" style="left:1673px;top:466.5px;width:16px;height:16px;background:#ebecf0;border-radius:3px"></div>
<svg style="left:1676px;top:471.5px" width="10" height="6"><path d="M1,1 L5,5 L9,1" fill="none" stroke="#344563" stroke-width="2" stroke-linecap="round" stroke-linejoin="round"/></svg>
<div class="t" style="left:1695.40px;top:467.00px;font-size:18.5px;color:#172b4d;letter-spacing:0.118px;-webkit-text-stroke:0.35px #172b4d;">Dates</div>
<div class="t" style="left:1679.20px;top:505.00px;font-size:16px;color:#6b6b6b;letter-spacing:-0.187px;">Created</div>
<div class="t" style="left:1679.20px;top:533.00px;font-size:16px;color:#6b6b6b;letter-spacing:-0.049px;">Updated</div>
<div class="t" style="left:1876.90px;top:505.00px;font-size:16px;color:#172b4d;letter-spacing:-0.186px;">02/Dec/20 12:31 PM</div>
<div class="t" style="left:1876.90px;top:533.00px;font-size:16px;color:#172b4d;letter-spacing:-0.186px;">02/Dec/20 12:31 PM</div>
<div class="a" style="left:1673px;top:572.5px;width:16px;height:16px;background:#ebecf0;border-radius:3px"></div>
<svg style="left:1676px;top:577.5px" width="10" height="6"><path d="M1,1 L5,5 L9,1" fill="none" stroke="#344563" stroke-width="2" stroke-linecap="round" stroke-linejoin="round"/></svg>
<div class="t" style="left:1695.40px;top:572.00px;font-size:18.5px;color:#172b4d;letter-spacing:0.269px;-webkit-text-stroke:0.35px #172b4d;">Inbound References</div>
<div class="a" style="left:1683px;top:612px;width:24px;height:18px;background:#2a6cb3;border-radius:9px"></div>
<svg style="left:0;top:0" width="1" height="1"><path fill="#fff" d="M1695.4,616.3 L1698,616.3 L1698,625.2 L1695.5,625.2 L1695.5,619.3 L1692,620.9 L1692,618.9 Z"/></svg>
<div class="t" style="left:1713.10px;top:613.00px;font-size:16px;color:#0052cc;letter-spacing:0.281px;">Employees</div>
<div class="a" style="left:2001px;top:613px;width:18px;height:18px;background:#114a1a;border-radius:4px"></div>
<div class="a" style="left:1673px;top:652.5px;width:16px;height:16px;background:#ebecf0;border-radius:3px"></div>
<svg style="left:1676px;top:657.5px" width="10" height="6"><path d="M1,1 L5,5 L9,1" fill="none" stroke="#344563" stroke-width="2" stroke-linecap="round" stroke-linejoin="round"/></svg>
<div class="t" style="left:1695.40px;top:653.00px;font-size:18.5px;color:#172b4d;letter-spacing:0.607px;-webkit-text-stroke:0.35px #172b4d;">Attachments</div>
<svg style="left:1678px;top:680px" width="348" height="78"><rect x="1.5" y="2" width="344.5" height="74" fill="#fff" stroke="#c6c6c6" stroke-width="1.8" stroke-dasharray="4.6 3.1"/></svg>
<svg style="left:1768px;top:700px" width="18" height="20" viewBox="0 0 18 20"><path d="M2.3,12 V2.6 H8.8" fill="none" stroke="#d0d0d0" stroke-width="1.8" stroke-linecap="round"/><rect x="5.9" y="5.9" width="10.2" height="12" rx="2" fill="none" stroke="#d0d0d0" stroke-width="1.9"/></svg>
<div class="t" style="left:1789.00px;top:703.00px;font-size:16px;color:#c9c9c9;letter-spacing:0.663px;">Drop files to attach</div>
<div class="t" style="left:1730.50px;top:724.00px;font-size:12px;color:#cdcdcd;letter-spacing:0.725px;">The maximum file upload size is 1.9 GB.</div>
<div class="a" style="left:1921px;top:769px;width:102px;height:29px;background:#ebecf0;border-radius:3px"></div>
<div class="t" style="left:1933.70px;top:777.00px;font-size:14px;color:#172b4d;letter-spacing:0.369px;">Attach Files</div>
<div class="t" style="left:1680.00px;top:789.00px;font-size:16px;color:#7a7a7a;letter-spacing:-0.04px;font-style:italic;">There are no attachments</div>
<div class="a" style="left:1673px;top:827px;width:16px;height:16px;background:#ebecf0;border-radius:3px"></div>
<svg style="left:1676px;top:832px" width="10" height="6"><path d="M1,1 L5,5 L9,1" fill="none" stroke="#344563" stroke-width="2" stroke-linecap="round" stroke-linejoin="round"/></svg>
<div class="t" style="left:1695.40px;top:827.00px;font-size:18.5px;color:#172b4d;letter-spacing:0.349px;-webkit-text-stroke:0.35px #172b4d;">Connected Jira issues</div>
<div class="t" style="left:1680.00px;top:859.00px;font-size:16px;color:#172b4d;letter-spacing:-0.15px;">Filter:</div>
<div class="t" style="left:1727.40px;top:859.00px;font-size:16px;color:#172b4d;font-weight:700;letter-spacing:-0.305px;">Unresolved</div>
<div class="t" style="left:1680.00px;top:886.00px;font-size:16px;color:#7a7a7a;letter-spacing:0.156px;font-style:italic;">No related issues found for specified filter!</div>
<div class="a" style="left:665px;top:112px;width:8px;height:62px;background:#6c50c4;"></div>
<div class="a" style="left:657px;top:162px;width:24px;height:24px;background:#6c50c4;border-radius:50%"></div>
</body></html>
